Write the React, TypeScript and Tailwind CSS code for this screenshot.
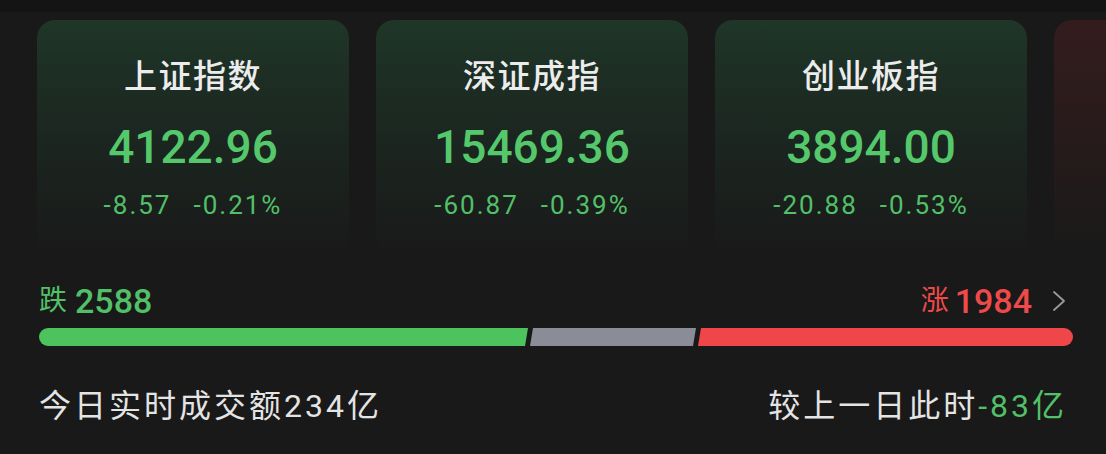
import React from "react";

type IndexCard = {
  name: string;
  value: string;
  change: string;
  percent: string;
};

const indices: IndexCard[] = [
  { name: "上证指数", value: "4122.96", change: "-8.57", percent: "-0.21%" },
  { name: "深证成指", value: "15469.36", change: "-60.87", percent: "-0.39%" },
  { name: "创业板指", value: "3894.00", change: "-20.88", percent: "-0.53%" },
];

const cjk = "font-['Roboto','Noto_Sans_CJK_SC',sans-serif]";

function Card({ item }: { item: IndexCard }) {
  return (
    <div className="flex h-[236px] w-[312px] shrink-0 flex-col items-center rounded-[18px] bg-gradient-to-b from-[#1f3628] via-[#1b2620] to-[#191919]">
      <div className="mt-[36px] text-[33px] font-medium leading-[42px] tracking-[1.5px] text-[#ececec]">
        {item.name}
      </div>
      <div className="mt-[24px] text-[46px] font-medium leading-[50px] text-[#55c86c]">
        {item.value}
      </div>
      <div className="mt-[19px] flex gap-[22px] text-[26px] leading-[28px] tracking-[2px] text-[#52c068]">
        <span>{item.change}</span>
        <span>{item.percent}</span>
      </div>
    </div>
  );
}

export default function App() {
  return (
    <div className={`relative h-[454px] w-[1106px] overflow-hidden bg-[#191919] ${cjk}`}>
      {/* darker strip along the top edge */}
      <div className="h-[12px] bg-[#141414]" />
      <div className="mt-[8px] flex gap-[27px] pl-[37px]">
        {indices.map((item) => (
          <Card key={item.name} item={item} />
        ))}
        <div className="h-[236px] w-[312px] shrink-0 rounded-[18px] bg-gradient-to-b from-[#341c1d] via-[#271b1b] to-[#191919]" />
      </div>

      <div className="pl-[39px] pr-[33px]">
        {/* falling / rising counts */}
        <div className="mt-[30px] flex h-[30px] items-center justify-between">
          <div className="flex items-center text-[#52c068]">
            <span className="text-[28px] leading-[30px]">跌</span>
            <span className="ml-[8px] text-[34px] font-medium leading-[30px]">2588</span>
          </div>
          <div className="flex items-center pr-[7px]">
            <span className="text-[28px] leading-[30px] text-[#ee4a4a]">涨</span>
            <span className="ml-[6px] text-[34px] font-medium leading-[30px] text-[#ee4a4a]">1984</span>
            <svg className="ml-[20px]" width="14" height="22" viewBox="0 0 14 22" fill="none">
              <polyline points="2,2 12,11 2,20" stroke="#9a9a9a" strokeWidth="1.8" strokeLinejoin="round" strokeLinecap="round" />
            </svg>
          </div>
        </div>

        {/* breadth bar */}
        <div className="mt-[12px] flex h-[18px] gap-[2px]">
          <div className="h-full w-[489px] rounded-l-full bg-[#4cc35d] [clip-path:polygon(0_0,100%_0,calc(100%-3px)_100%,0_100%)]" />
          <div className="h-full w-[166px] bg-[#8a8d97] [clip-path:polygon(3px_0,100%_0,calc(100%-3px)_100%,0_100%)]" />
          <div className="h-full flex-1 rounded-r-full bg-[#ef4749] [clip-path:polygon(3px_0,100%_0,100%_100%,0_100%)]" />
        </div>

        {/* turnover */}
        <div className="mt-[42px] flex items-center justify-between text-[32px] leading-[36px] tracking-[3px] text-[#e4e4e4]">
          <span>今日实时成交额234亿</span>
          <span className="pr-[6px]">
            较上一日此时<span className="text-[#52c068]">-83亿</span>
          </span>
        </div>
      </div>
    </div>
  );
}
